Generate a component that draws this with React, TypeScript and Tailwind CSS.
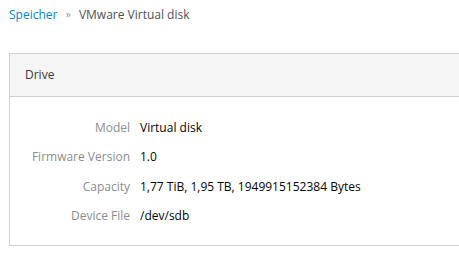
import React from 'react';

const rows: { label: string; value: string }[] = [
  { label: 'Model', value: 'Virtual disk' },
  { label: 'Firmware Version', value: '1.0' },
  { label: 'Capacity', value: '1,77 TiB, 1,95 TB, 1949915152384 Bytes' },
  { label: 'Device File', value: '/dev/sdb' },
];

export default function App() {
  return (
    <div className="w-[459px] h-[278px] overflow-hidden bg-white text-[12px] font-['Open_Sans',sans-serif]">
      {/* Breadcrumb */}
      <div className="flex items-center h-[28px] pl-[9px] pt-[1px]">
        <a className="text-[#0088ce] cursor-pointer">Speicher</a>
        <span className="mx-[8px] text-[#9c9c9c] text-[11px]">»</span>
        <span className="text-[#4d5258]">VMware Virtual disk</span>
      </div>

      {/* Drive panel */}
      <div className="ml-[9px] mt-[25px] w-[460px] border border-[#d1d1d1] bg-white">
        <div className="h-[43px] flex items-center px-[15px] bg-[#f5f5f5] border-b border-[#d1d1d1] text-[#363636]">
          Drive
        </div>
        <div className="grid grid-cols-[120px_1fr] gap-x-[10px] gap-y-[12.4px] pt-[22px] pb-[21px]">
          {rows.map(r => (
            <React.Fragment key={r.label}>
              <div className="text-right text-[#8b8d8f] leading-[17px]">{r.label}</div>
              <div className="text-[#030303] leading-[17px]">{r.value}</div>
            </React.Fragment>
          ))}
        </div>
      </div>
    </div>
  );
}
